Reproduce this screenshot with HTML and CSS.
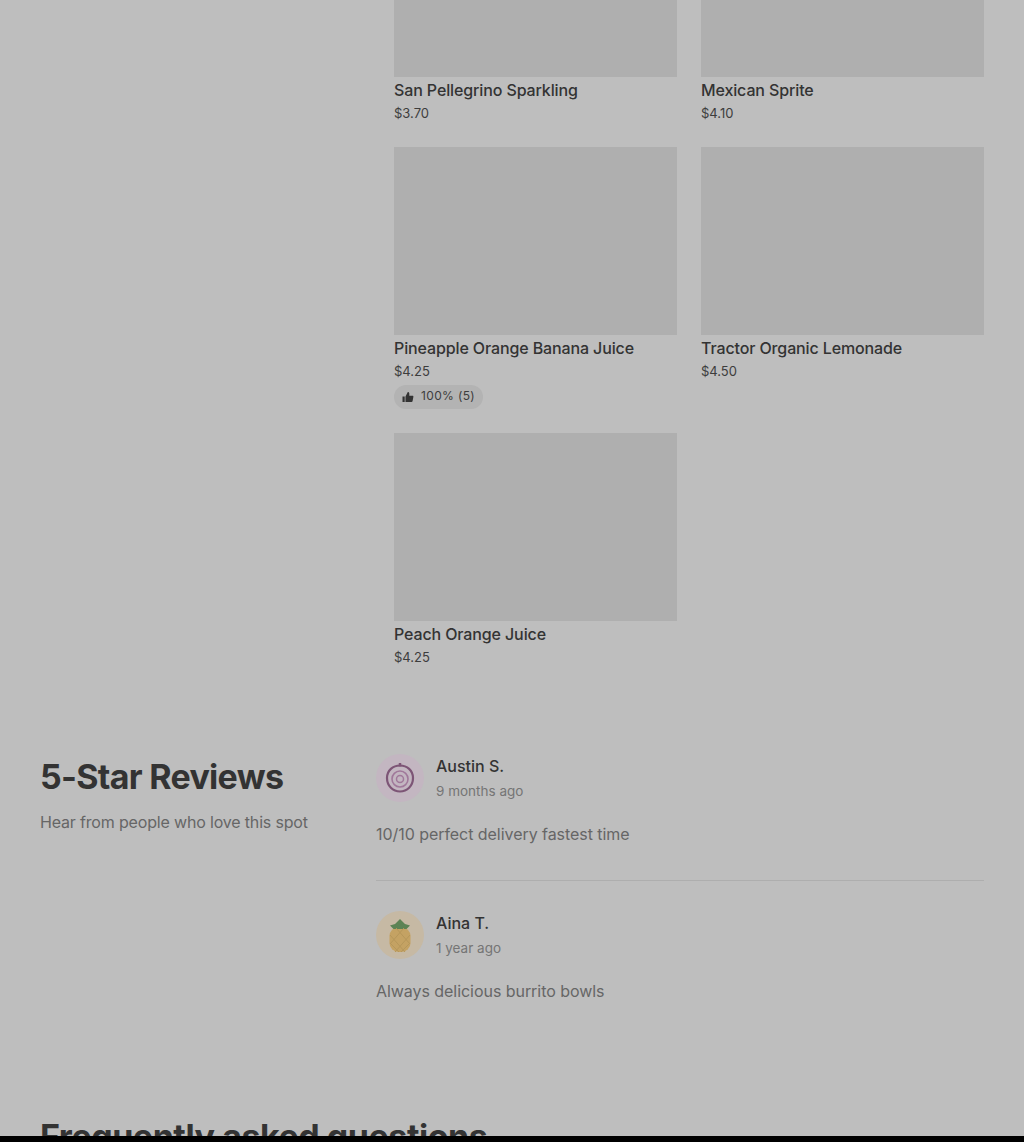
FILE: index.html
```html
<!DOCTYPE html>
<html lang="en">
<head>
<title>Store menu</title>
<meta charset="UTF-8">
<link rel="stylesheet" href="styles.css">
</head>
<body>
<div class="page">
    <div class="menu">
        <div class="item">
            <div class="photo photo-cut"></div>
            <div class="item-name">San Pellegrino Sparkling</div>
            <div class="item-price">$3.70</div>
        </div>
        <div class="item">
            <div class="photo photo-cut"></div>
            <div class="item-name">Mexican Sprite</div>
            <div class="item-price">$4.10</div>
        </div>
        <div class="item">
            <div class="photo"></div>
            <div class="item-name">Pineapple Orange Banana Juice</div>
            <div class="item-price">$4.25</div>
            <div class="rating">
                <svg class="thumb" viewBox="0 0 12 12"><path d="M0.5 5.5h2.2v5.5H0.5z"/><path d="M3.5 5.4 5.8 1c.9 0 1.5.6 1.5 1.5v2.2h3.2c.6 0 1 .5.9 1.1l-.8 4.2c-.1.6-.5 1-1.1 1H3.5z"/></svg>
                <span class="rating-text">100% (5)</span>
            </div>
        </div>
        <div class="item">
            <div class="photo"></div>
            <div class="item-name">Tractor Organic Lemonade</div>
            <div class="item-price">$4.50</div>
        </div>
        <div class="item">
            <div class="photo"></div>
            <div class="item-name">Peach Orange Juice</div>
            <div class="item-price">$4.25</div>
        </div>
    </div>

    <div class="reviews">
        <div class="reviews-intro">
            <h2 class="reviews-title">5-Star Reviews</h2>
            <p class="reviews-sub">Hear from people who love this spot</p>
        </div>
        <div class="reviews-list">
            <div class="review">
                <div class="review-head">
                    <div class="avatar avatar-onion">
                        <svg viewBox="0 0 48 48" width="48" height="48" fill="none" stroke="#7d5576">
                            <path d="M24 11.500c7 0 13 4.800 13 12.500 0 8-6 13.500-13 13.500S11 32 11 24c0-7.700 6-12.500 13-12.500z" stroke-width="2.200"/>
                            <path d="M24 9v3.500" stroke-width="2.500"/>
                            <circle cx="24" cy="25" r="8" stroke-width="1.600" stroke="#a0789a"/>
                            <circle cx="24" cy="25" r="3.500" stroke-width="1.500" stroke="#a0789a"/>
                        </svg>
                    </div>
                    <div>
                        <div class="review-name">Austin S.</div>
                        <div class="review-date">9 months ago</div>
                    </div>
                </div>
                <p class="review-text">10/10 perfect delivery fastest time</p>
            </div>
            <div class="review">
                <div class="review-head">
                    <div class="avatar avatar-pineapple">
                        <svg viewBox="0 0 48 48" width="48" height="48">
                            <rect x="13.500" y="16" width="21" height="25" rx="9" fill="#c4a263"/>
                            <path d="M14 14.500 19 13 24 8l5 5 5 1.500-3.500 3.500h-13z" fill="#5c8355"/>
                            <path d="M14 24l15 17M14 32l9 9M20 17l14 16M34 24 19 41M34 32l-9 9M28 17 14 33" stroke="#b6975a" stroke-width="1" fill="none"/>
                        </svg>
                    </div>
                    <div>
                        <div class="review-name">Aina T.</div>
                        <div class="review-date">1 year ago</div>
                    </div>
                </div>
                <p class="review-text">Always delicious burrito bowls</p>
            </div>
        </div>
    </div>

    <h2 class="faq-title">Frequently asked questions</h2>
</div>
<div class="bottom-bar"></div>
</body>
</html>
```

FILE: styles.css
```css
html, body {
    margin: 0;
    height: 1142px;
    overflow: hidden;
}

body {
    font-family: Inter, "Liberation Sans", sans-serif;
    background-color: #bebebe;
    color: #333;
    position: relative;
}

.page {
    padding: 0 40px;
}

.menu {
    display: grid;
    grid-template-columns: 283px 283px;
    column-gap: 24px;
    margin-left: 354px;
}

.item {
    padding-bottom: 24px;
}

.photo {
    height: 188px;
    background-color: #afafaf;
}

.photo-cut {
    height: 77px;
}

.item-name {
    margin-top: 3px;
    font-size: 16px;
    line-height: 20px;
    font-weight: 500;
    letter-spacing: -0.12px;
}

.item-price {
    margin-top: 3px;
    font-size: 13px;
    line-height: 20px;
    color: #3d3d3d;
}

.rating {
    display: inline-flex;
    align-items: center;
    gap: 7px;
    margin-top: 4px;
    padding: 0 8px;
    height: 24px;
    border-radius: 12px;
    background-color: #b3b3b3;
    font-size: 12px;
    letter-spacing: 0.35px;
    color: #3d3d3d;
}

.rating-text {
    line-height: 22px;
    margin-bottom: 2px;
}

.thumb {
    width: 12px;
    height: 12px;
    fill: #333;
}

.reviews {
    display: flex;
    margin-top: 63px;
}

.reviews-intro {
    width: 336px;
    flex: none;
}

.reviews-title {
    margin: 1px 0 -1px;
    font-size: 34px;
    line-height: 44px;
    font-weight: 700;
    letter-spacing: -0.7px;
}

.reviews-sub {
    margin: 12px 0 0;
    font-size: 16px;
    line-height: 24px;
    letter-spacing: -0.17px;
    color: #666;
}

.reviews-list {
    flex: 1;
}

.review {
    padding-bottom: 34px;
    margin-bottom: 30px;
    border-bottom: 1px solid #aeaeae;
}

.review:last-child {
    border-bottom: none;
    margin-bottom: 0;
}

.review-head {
    display: flex;
    align-items: center;
    gap: 12px;
}

.avatar {
    width: 48px;
    height: 48px;
    border-radius: 50%;
}

.avatar-onion {
    background-color: #c3b6c1;
}

.avatar-pineapple {
    background-color: #c6b9a4;
}

.review-name {
    font-size: 16px;
    line-height: 22px;
    font-weight: 500;
}

.review-date {
    font-size: 13.500px;
    line-height: 20px;
    margin-top: 4px;
    color: #757575;
}

.review-text {
    margin: 20px 0 0;
    font-size: 16px;
    line-height: 24px;
    letter-spacing: -0.05px;
    color: #666;
}

.faq-title {
    margin: 78px 0 0;
    font-size: 34px;
    line-height: 44px;
    font-weight: 700;
    letter-spacing: -0.46px;
}

.bottom-bar {
    position: absolute;
    left: 0;
    right: 0;
    bottom: 0;
    height: 6px;
    background-color: #000;
}
```
